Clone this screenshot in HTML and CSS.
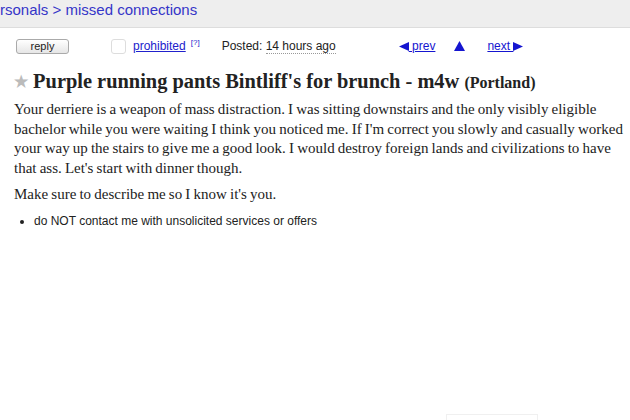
FILE: index.html
```html
<!DOCTYPE html>
<html lang="en">
<head>
    <meta charset="UTF-8">
    <title>Purple running pants Bintliff's for brunch - m4w</title>
    <link rel="stylesheet" href="styles.css">
</head>
<body>
    <div class="crumbs">
        <a href="#">rsonals</a> &gt; <a href="#">missed connections</a>
    </div>

    <div class="actions">
        <button class="reply">reply</button>
        <span class="flag-box"></span>
        <a class="prohibited" href="#">prohibited</a><sup class="help">[?]</sup>
        <span class="posted">Posted: <span class="ago">14 hours ago</span></span>
        <a class="nav prev" href="#"><svg width="10" height="9" viewBox="0 0 10 9"><path d="M0 4.5 L10 0 L10 9 Z" fill="currentColor"/></svg> prev</a>
        <a class="nav up" href="#"><svg width="11" height="10" viewBox="0 0 11 10"><path d="M5.5 0 L11 10 L0 10 Z" fill="currentColor"/></svg></a>
        <a class="nav next" href="#">next <svg width="10" height="9" viewBox="0 0 10 9"><path d="M10 4.5 L0 0 L0 9 Z" fill="currentColor"/></svg></a>
    </div>

    <h2 class="post-title"><span class="star">&#9733;</span> Purple running pants Bintliff's for brunch - m4w <small>(Portland)</small></h2>

    <div class="post-body">
        <p>Your derriere is a weapon of mass distraction. I was sitting downstairs and the only visibly eligible<br>
        bachelor while you were waiting I think you noticed me. If I'm correct you slowly and casually worked<br>
        your way up the stairs to give me a good look. I would destroy foreign lands and civilizations to have<br>
        that ass. Let's start with dinner though.</p>
        <p>Make sure to describe me so I know it's you.</p>
    </div>

    <ul class="notices">
        <li>do NOT contact me with unsolicited services or offers</li>
    </ul>

    <div class="footer-box"></div>
</body>
</html>
```

FILE: styles.css
```css
html, body {
    overflow: hidden;
}
body {
    margin: 0;
    font-family: "Liberation Serif", "Times New Roman", serif;
    color: #222;
    background-color: #fff;
}
a {
    color: #2121cc;
}
.crumbs {
    background-color: #eeeeee;
    border-bottom: 1px solid #dddddd;
    height: 28px;
    box-sizing: border-box;
    font-family: "Liberation Sans", Arial, sans-serif;
    font-size: 15px;
    line-height: 19px;
    color: #3535c8;
}
.crumbs a {
    color: #3535c8;
    text-decoration: none;
}
.actions {
    display: flex;
    align-items: center;
    height: 16px;
    margin: 10px 0 0 16px;
    font-family: "Liberation Sans", Arial, sans-serif;
    font-size: 12px;
    color: #222;
}
.reply {
    width: 53px;
    height: 15px;
    padding: 0;
    font-family: "Liberation Sans", Arial, sans-serif;
    font-size: 11px;
    color: #222;
    background: linear-gradient(#ffffff, #e6e6e6);
    border: 1px solid #aaaaaa;
    border-radius: 3px;
}
.flag-box {
    width: 13px;
    height: 13px;
    margin-left: 42px;
    border: 1px solid #dddddd;
    border-radius: 3px;
}
.prohibited {
    margin-left: 7px;
}
.help {
    font-size: 8px;
    color: #2121cc;
    margin-left: 5px;
    align-self: flex-start;
}
.posted {
    margin-left: 22px;
}
.ago {
    border-bottom: 1px dotted #999;
}
.nav {
    color: #1515d0;
}
.nav svg {
    vertical-align: -1px;
}
.prev {
    margin-left: 63px;
}
.up {
    margin-left: 19px;
    text-decoration: none;
}
.next {
    margin-left: 22px;
}
.post-title {
    margin: 15px 0 0 14px;
    font-size: 20.4px;
    line-height: 24px;
    color: #222;
}
.post-title small {
    font-size: 16px;
}
.star {
    color: #bbbbbb;
    font-size: 16px;
    vertical-align: 1px;
}
.post-body {
    margin: 5px 0 0 14px;
    font-size: 15px;
    line-height: 19.5px;
    word-spacing: -0.6px;
    white-space: nowrap;
}
.post-body p {
    margin: 0 0 7px 0;
}
.notices {
    margin: 9px 0 0 0;
    padding-left: 34px;
    font-family: "Liberation Sans", Arial, sans-serif;
    font-size: 12px;
}
.footer-box {
    width: 90px;
    height: 20px;
    margin: 186px 0 0 446px;
    border: 1px solid #f0f0f0;
}
```
